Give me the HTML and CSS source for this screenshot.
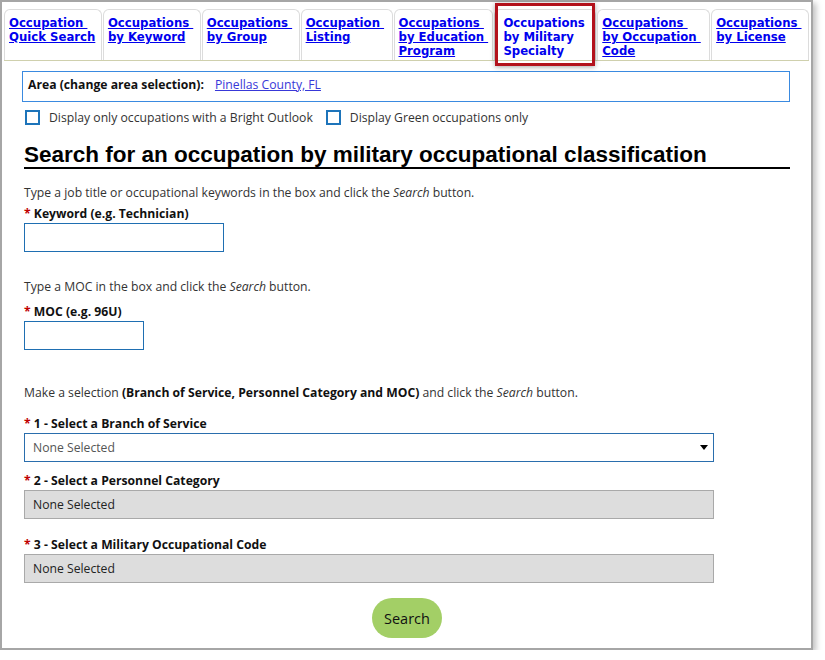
FILE: index.html
```html
<!DOCTYPE html>
<html lang="en">
<head>
    <meta charset="UTF-8">
    <meta name="viewport" content="width=device-width, initial-scale=1.0">
    <title>Occupations by Military Specialty</title>
    <link rel="stylesheet" href="styles.css">
</head>
<body>
    <div class="frame">
        <ul class="tabs">
            <li class="tab tab-quick"><a href="#">Occupation&nbsp;<br>Quick Search</a></li>
            <li class="tab tab-keyword"><a href="#">Occupations&nbsp;<br>by Keyword</a></li>
            <li class="tab tab-group"><a href="#">Occupations&nbsp;<br>by Group</a></li>
            <li class="tab tab-listing"><a href="#">Occupation&nbsp;<br>Listing</a></li>
            <li class="tab tab-education"><a href="#">Occupations&nbsp;<br>by Education&nbsp;<br>Program</a></li>
            <li class="tab tab-military active"><a href="#">Occupations<br>by Military<br>Specialty</a></li>
            <li class="tab tab-code"><a href="#">Occupations&nbsp;<br>by Occupation&nbsp;<br>Code</a></li>
            <li class="tab tab-license"><a href="#">Occupations&nbsp;<br>by License</a></li>
        </ul>

        <div class="content">
            <div class="area">
                <span class="area-label">Area (change area selection):</span>
                <a href="#" class="area-link">Pinellas County, FL</a>
            </div>

            <div class="filters">
                <label class="filter filter-bright">
                    <span class="checkbox"></span>
                    Display only occupations with a Bright Outlook
                </label>
                <label class="filter">
                    <span class="checkbox"></span>
                    Display Green occupations only
                </label>
            </div>

            <h1>Search for an occupation by military occupational classification</h1>

            <p class="hint">Type a job title or occupational keywords in the box and click the <em>Search</em> button.</p>
            <label class="field-label" for="keyword"><span class="req">*</span> Keyword (e.g. Technician)</label>
            <input type="text" id="keyword" class="text-input keyword">

            <p class="hint hint-moc">Type a MOC in the box and click the <em>Search</em> button.</p>
            <label class="field-label label-moc" for="moc"><span class="req">*</span> MOC (e.g. 96U)</label>
            <input type="text" id="moc" class="text-input moc">

            <p class="hint hint-select">Make a selection <strong>(Branch of Service, Personnel Category and MOC)</strong> and click the <em>Search</em> button.</p>

            <label class="field-label label-branch" for="branch"><span class="req">*</span> 1 - Select a Branch of Service</label>
            <div class="select-wrap">
                <select id="branch" class="select">
                    <option>None Selected</option>
                </select>
                <svg class="select-arrow" width="8" height="5" viewBox="0 0 8 5"><path d="M0 0 H8 L4 5 Z" fill="#000"/></svg>
            </div>

            <label class="field-label label-category" for="category"><span class="req">*</span> 2 - Select a Personnel Category</label>
            <select id="category" class="select" disabled>
                <option>None Selected</option>
            </select>

            <label class="field-label label-code" for="code"><span class="req">*</span> 3 - Select a Military Occupational Code</label>
            <select id="code" class="select" disabled>
                <option>None Selected</option>
            </select>

            <div class="actions">
                <button class="search-btn">Search</button>
            </div>
        </div>
    </div>
</body>
</html>
```

FILE: styles.css
```css
* {
    box-sizing: border-box;
}

body {
    margin: 0;
    padding: 0;
    background-color: white;
    font-family: 'Open Sans', 'Noto Sans', sans-serif;
    font-size: 12.2px;
    color: #333;
}

.frame {
    width: 813px;
    height: 650px;
    border: 2px solid #a6a6a6;
    box-shadow: 3px 3px 6px rgba(0, 0, 0, 0.25);
    background-color: white;
}

/* tabs */
.tabs {
    list-style: none;
    display: flex;
    gap: 1px;
    margin: 7px 0 0 2px;
    padding: 0;
    width: 805px;
    border-bottom: 1px solid #cfd0ad;
}

.tab {
    position: relative;
    height: 51px;
    padding: 6px 4px 0 4px;
    border: 1px solid #dcdcdc;
    border-bottom: none;
    border-radius: 6px 6px 0 0;
    background-color: white;
    line-height: 14px;
}

.tab a {
    font-family: 'DejaVu Sans Condensed', 'DejaVu Sans', sans-serif;
    font-weight: bold;
    font-size: 13px;
    line-height: 14px;
    color: #0000ee;
    white-space: nowrap;
}

.tab-quick { width: 98px; }
.tab-keyword { width: 98px; }
.tab-group { width: 98px; }
.tab-listing { width: 92px; }
.tab-education { width: 100px; }
.tab-military { width: 102px; }
.tab-code { width: 113px; }
.tab-license { width: 98px; }

.tab.active {
    padding-left: 8px;
}

.tab.active a {
    text-decoration: none;
}

.tab.active::after {
    content: '';
    position: absolute;
    top: -7px;
    bottom: -6px;
    left: 0;
    right: 0;
    border: 3px solid #b3121c;
    box-shadow: 0 1px 5px rgba(0, 0, 0, 0.35);
}

/* content */
.content {
    padding: 0 21px 0 22px;
}

.area {
    display: flex;
    align-items: center;
    gap: 11px;
    height: 31px;
    margin: 10px 0 0 -2px;
    padding: 0 0 5px 5px;
    border: 1px solid #3a8ae0;
}

.area-label {
    font-weight: bold;
    color: #111;
}

.area-link {
    color: #3838d8;
}

.filters {
    display: flex;
    align-items: center;
    height: 16px;
    margin-top: 7px;
}

.filter {
    display: flex;
    align-items: center;
    gap: 9px;
    margin-left: 1px;
}

.filter-bright {
    margin-right: 12px;
}

.checkbox {
    width: 15px;
    height: 15px;
    border: 2px solid #1d74ba;
}

h1 {
    font-family: 'Liberation Sans', Arial, sans-serif;
    font-size: 22.5px;
    line-height: 24px;
    color: black;
    margin: 18px 0 0 0;
    border-bottom: 2px solid black;
}

.hint {
    margin: 15px 0 0 0;
    line-height: 18px;
}

.hint-moc {
    margin-top: 26px;
}

.hint-select {
    margin-top: 34px;
}

.hint strong {
    color: #111;
}

.field-label {
    display: block;
    margin-top: 3px;
    line-height: 18px;
    font-weight: bold;
    color: #111;
}

.label-moc {
    margin-top: 7px;
}

.label-branch {
    margin-top: 13px;
}

.label-category {
    margin-top: 10px;
}

.label-code {
    margin-top: 17px;
}

.req {
    color: #c00000;
}

.text-input {
    display: block;
    height: 29px;
    border: 1px solid #1f6fb2;
    font-family: inherit;
    font-size: 12px;
}

.keyword {
    width: 200px;
}

.moc {
    width: 120px;
}

.select-wrap {
    position: relative;
    width: 690px;
}

.select {
    display: block;
    width: 690px;
    height: 29px;
    padding: 0 0 0 8px;
    appearance: none;
    border: 1px solid #a9a9a9;
    border-radius: 0;
    background-color: #dddddd;
    font-family: inherit;
    font-size: 12.2px;
    color: #222;
    opacity: 1;
}

.select-wrap .select {
    background-color: white;
    border-color: #2a6ead;
    color: #555;
}

.select-arrow {
    position: absolute;
    right: 6px;
    top: 12px;
}

.actions {
    display: flex;
    justify-content: center;
    margin-top: 15px;
}

.search-btn {
    min-width: 70px;
    height: 40px;
    padding: 0 10px;
    border: none;
    border-radius: 20px;
    background-color: #a3cf66;
    font-family: inherit;
    font-size: 14.5px;
    color: #111;
    cursor: pointer;
}
```
